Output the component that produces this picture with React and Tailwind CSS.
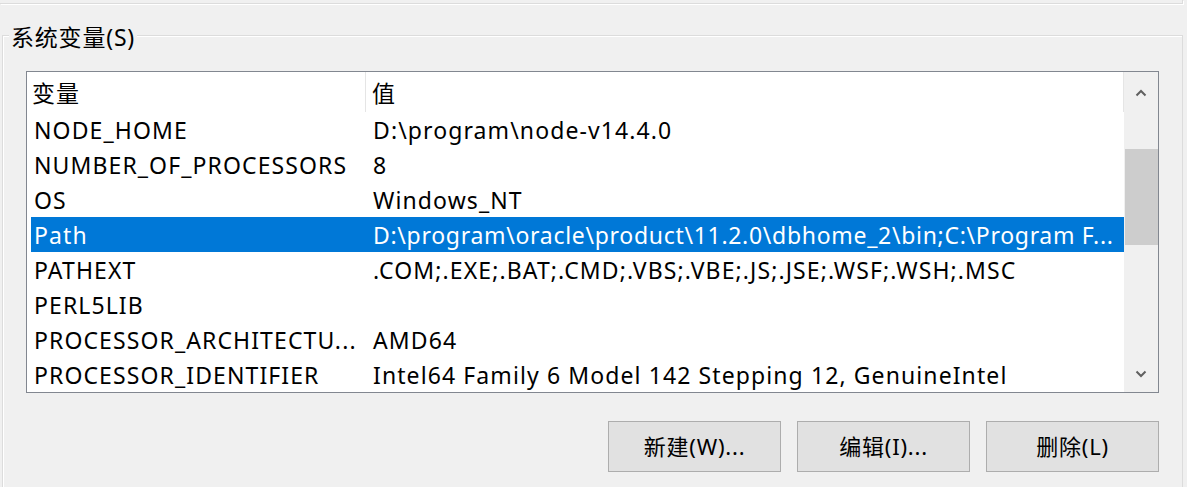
const rows = [
  { name: "NODE_HOME", value: "D:\\program\\node-v14.4.0" },
  { name: "NUMBER_OF_PROCESSORS", value: "8" },
  { name: "OS", value: "Windows_NT" },
  {
    name: "Path",
    value: "D:\\program\\oracle\\product\\11.2.0\\dbhome_2\\bin;C:\\Program F...",
    selected: true,
  },
  { name: "PATHEXT", value: ".COM;.EXE;.BAT;.CMD;.VBS;.VBE;.JS;.JSE;.WSF;.WSH;.MSC" },
  { name: "PERL5LIB", value: "" },
  { name: "PROCESSOR_ARCHITECTU...", value: "AMD64" },
  { name: "PROCESSOR_IDENTIFIER", value: "Intel64 Family 6 Model 142 Stepping 12, GenuineIntel" },
];

function Chevron({ down }) {
  return (
    <svg width="12" height="8" viewBox="0 0 12 8" fill="none">
      <polyline
        points={down ? "1.5 1.5 6 6 10.5 1.5" : "1.5 6.5 6 2 10.5 6.5"}
        stroke="#606060"
        strokeWidth="2"
      />
    </svg>
  );
}

export default function App() {
  return (
    <div
      className="w-[1187px] h-[487px] overflow-hidden bg-[#f0f0f0] text-black"
      style={{ fontFamily: '"Noto Sans", "Noto Sans CJK SC", sans-serif' }}
    >
      {/* upper group box, only its bottom edge shows */}
      <div className="w-[1183px] h-[4px] border-b border-r border-[#dcdcdc] shadow-[1px_1px_0_#ffffff]" />

      {/* 系统变量 group */}
      <div className="relative ml-[2px] mt-[31px] w-[1181px] h-[500px] border border-[#dcdcdc] shadow-[inset_1px_1px_0_#ffffff]">
        <span className="absolute left-[6px] top-[-14px] bg-[#f0f0f0] px-[2px] text-[23px] leading-[30px] tracking-[0.8px]">
          系统变量(S)
        </span>

        <div className="px-[23px] pt-[35px]">
          {/* list view */}
          <div className="flex h-[322px] border border-[#828790] bg-white">
            <div className="flex-1 flex flex-col overflow-hidden text-[23px] tracking-[1.1px]">
              {/* header */}
              <div className="flex h-[40px] shrink-0">
                <div className="w-[339px] shrink-0 pl-[5px] pt-[3px] flex items-center border-r border-[#e5e5e5]">
                  变量
                </div>
                <div className="flex-1 pl-[6px] pt-[3px] flex items-center border-r border-[#e5e5e5]">
                  值
                </div>
              </div>
              {/* rows */}
              {rows.map((r) => (
                <div
                  key={r.name}
                  className={`ml-[4px] flex h-[35px] shrink-0 items-center pt-[2px] ${
                    r.selected ? "bg-[#0078d7] text-white" : ""
                  }`}
                >
                  <div className="w-[335px] shrink-0 pl-[3px] whitespace-nowrap overflow-hidden">
                    {r.name}
                  </div>
                  <div
                    className={`flex-1 pl-[7px] whitespace-nowrap overflow-hidden ${
                      r.selected ? "tracking-[0.7px]" : ""
                    }`}
                  >
                    {r.value}
                  </div>
                </div>
              ))}
            </div>

            {/* scrollbar */}
            <div className="w-[34px] shrink-0 bg-[#f0f0f0] flex flex-col">
              <div className="h-[40px] flex items-center justify-center pt-[2px]">
                <Chevron />
              </div>
              <div className="mt-[37px] ml-[1px] h-[96px] bg-[#cdcdcd]" />
              <div className="flex-1" />
              <div className="h-[36px] flex items-center justify-center">
                <Chevron down />
              </div>
            </div>
          </div>

          {/* buttons */}
          <div className="mt-[28px] flex justify-end gap-[16px]">
            {["新建(W)...", "编辑(I)...", "删除(L)"].map((t) => (
              <button
                key={t}
                className="w-[173px] h-[51px] bg-[#e1e1e1] border border-[#adadad] text-[22px] tracking-[0.8px] text-black"
              >
                {t}
              </button>
            ))}
          </div>
        </div>
      </div>
    </div>
  );
}
